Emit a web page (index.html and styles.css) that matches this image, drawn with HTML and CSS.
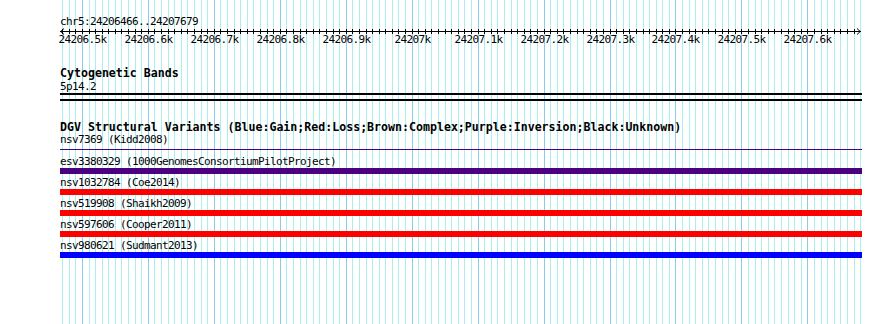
FILE: index.html
```html
<!DOCTYPE html>
<html>
<head>
<meta charset="utf-8">
<title>chr5:24206466..24207679</title>
<link rel="stylesheet" href="styles.css">
</head>
<body>
<div class="page">
  <svg class="grid" id="grid" width="890" height="324"></svg>
  <div class="view">
    <div class="loc">chr5:24206466..24207679</div>
    <svg class="ruler" id="ruler" width="802" height="20"></svg>
    <section class="track cyto">
      <h2 class="ttitle">Cytogenetic Bands</h2>
      <div class="flabel">5p14.2</div>
      <div class="rule"></div>
      <div class="rule second"></div>
    </section>
    <section class="track dgv">
      <h2 class="ttitle">DGV Structural Variants (Blue:Gain;Red:Loss;Brown:Complex;Purple:Inversion;Black:Unknown)</h2>
      <div class="flabel">nsv7369 (Kidd2008)</div>
      <div class="thin purple"></div>
      <div class="feats">
        <div class="feat"><div class="flabel">esv3380329 (1000GenomesConsortiumPilotProject)</div><div class="bar purple"></div></div>
        <div class="feat"><div class="flabel">nsv1032784 (Coe2014)</div><div class="bar red"></div></div>
        <div class="feat"><div class="flabel">nsv519908 (Shaikh2009)</div><div class="bar red"></div></div>
        <div class="feat"><div class="flabel">nsv597606 (Cooper2011)</div><div class="bar red"></div></div>
        <div class="feat"><div class="flabel">nsv980621 (Sudmant2013)</div><div class="bar blue"></div></div>
      </div>
    </section>
  </div>
</div>
<script src="script.js"></script>
</body>
</html>
```

FILE: styles.css
```css
body {
  margin: 0;
  background: #fff;
}
.page {
  position: relative;
  width: 890px;
  height: 324px;
  overflow: hidden;
  font-family: "DejaVu Sans Mono", "Liberation Mono", monospace;
  font-size: 11px;
  letter-spacing: -0.62px;
  color: #000;
}
.grid {
  position: absolute;
  left: 0;
  top: 0;
  shape-rendering: crispEdges;
}
.view {
  position: relative;
  padding: 16px 0 0 60px;
  width: 802px;
}
.loc {
  height: 12px;
  line-height: 12px;
}
.ruler {
  display: block;
  overflow: visible;
  font-family: "DejaVu Sans Mono", "Liberation Mono", monospace;
  font-size: 11px;
  letter-spacing: -0.62px;
}
.track {
  display: flex;
  flex-direction: column;
}
.cyto {
  margin-top: 19px;
}
.dgv {
  margin-top: 20px;
}
.ttitle {
  margin: 0;
  font-size: 11.6px;
  letter-spacing: 0;
  font-weight: bold;
  line-height: 13px;
  height: 13px;
  white-space: nowrap;
}
.flabel {
  height: 12px;
  line-height: 12px;
  white-space: nowrap;
}
.cyto .flabel {
  margin-top: 1px;
}
.rule {
  height: 2px;
  background: #000;
}
.rule.second {
  margin-top: 4px;
}
.thin {
  height: 1px;
  margin-top: 3px;
}
.feats {
  display: flex;
  flex-direction: column;
  gap: 3px;
  margin-top: 6px;
}
.bar {
  height: 6px;
}
.purple { background: #4b0082; }
.red { background: #ff0000; }
.blue { background: #0000ff; }
```

FILE: script.js
```js
(function () {
  var start = 24206466, scale = 800 / 1213, L = 60;
  var ns = 'http://www.w3.org/2000/svg';
  var grid = document.getElementById('grid');
  var ruler = document.getElementById('ruler');
  function el(tag, attrs, parent) {
    var e = document.createElementNS(ns, tag);
    for (var k in attrs) e.setAttribute(k, attrs[k]);
    parent.appendChild(e);
    return e;
  }
  el('line', {x1: 0, y1: 3.5, x2: 801, y2: 3.5, stroke: '#000', 'shape-rendering': 'crispEdges'}, ruler);
  el('polyline', {points: '4,0.5 0.8,3.5 4,6.5', stroke: '#000', fill: 'none'}, ruler);
  el('polyline', {points: '797,0.5 800.2,3.5 797,6.5', stroke: '#000', fill: 'none'}, ruler);
  for (var bp = 24206470; bp <= 24207680; bp += 10) {
    var x = Math.floor(L + (bp - start) * scale) + 0.5;
    var major = bp % 100 === 0;
    el('line', {x1: x, y1: 0, x2: x, y2: 324, stroke: major ? '#88ccee' : '#aaeeee'}, grid);
    var lx = x - L;
    if (bp < 24207680) {
      el('line', {x1: lx, y1: 1, x2: lx, y2: 6, stroke: '#000', 'shape-rendering': 'crispEdges'}, ruler);
    }
    if (major && bp <= 24207600) {
      var t = el('text', {x: lx, y: 15, 'text-anchor': 'middle', fill: '#000'}, ruler);
      t.textContent = (bp / 1000) + 'k';
    }
  }
})();
```
